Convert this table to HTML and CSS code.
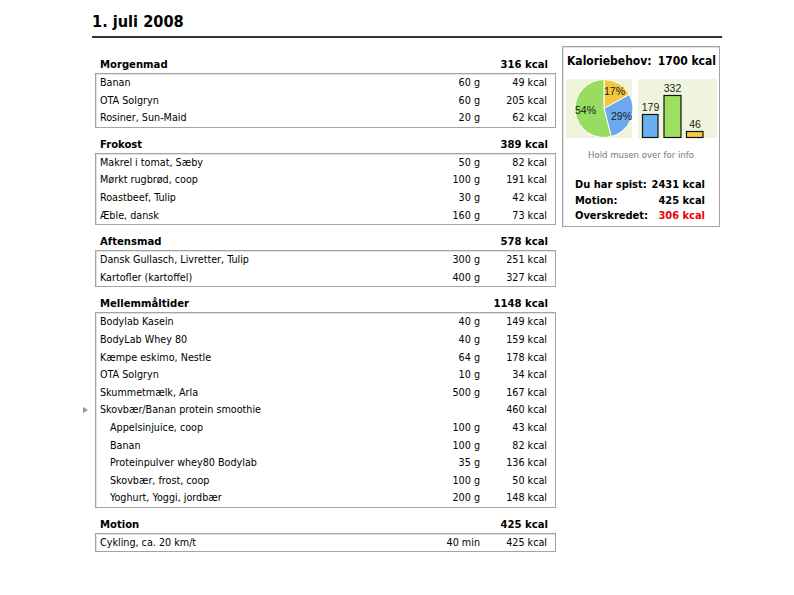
FILE: index.html
```html
<!DOCTYPE html>
<html lang="da">
<head>
<meta charset="utf-8">
<title>1. juli 2008</title>
<link rel="stylesheet" href="styles.css">
</head>
<body>
<div class="page">
  <h1 class="title">1. juli 2008</h1>
  <div class="main">
    <div class="meals">
      <section class="meal">
        <div class="meal-head"><span>Morgenmad</span><span>316 kcal</span></div>
        <div class="box">
          <div class="row"><span>Banan</span><span class="amt">60 g</span><span class="kcal">49 kcal</span></div>
          <div class="row"><span>OTA Solgryn</span><span class="amt">60 g</span><span class="kcal">205 kcal</span></div>
          <div class="row"><span>Rosiner, Sun-Maid</span><span class="amt">20 g</span><span class="kcal">62 kcal</span></div>
        </div>
      </section>
      <section class="meal">
        <div class="meal-head"><span>Frokost</span><span>389 kcal</span></div>
        <div class="box">
          <div class="row"><span>Makrel i tomat, Sæby</span><span class="amt">50 g</span><span class="kcal">82 kcal</span></div>
          <div class="row"><span>Mørkt rugbrød, coop</span><span class="amt">100 g</span><span class="kcal">191 kcal</span></div>
          <div class="row"><span>Roastbeef, Tulip</span><span class="amt">30 g</span><span class="kcal">42 kcal</span></div>
          <div class="row"><span>Æble, dansk</span><span class="amt">160 g</span><span class="kcal">73 kcal</span></div>
        </div>
      </section>
      <section class="meal">
        <div class="meal-head"><span>Aftensmad</span><span>578 kcal</span></div>
        <div class="box">
          <div class="row"><span>Dansk Gullasch, Livretter, Tulip</span><span class="amt">300 g</span><span class="kcal">251 kcal</span></div>
          <div class="row"><span>Kartofler (kartoffel)</span><span class="amt">400 g</span><span class="kcal">327 kcal</span></div>
        </div>
      </section>
      <section class="meal">
        <div class="meal-head"><span>Mellemmåltider</span><span>1148 kcal</span></div>
        <div class="box">
          <div class="row"><span>Bodylab Kasein</span><span class="amt">40 g</span><span class="kcal">149 kcal</span></div>
          <div class="row"><span>BodyLab Whey 80</span><span class="amt">40 g</span><span class="kcal">159 kcal</span></div>
          <div class="row"><span>Kæmpe eskimo, Nestle</span><span class="amt">64 g</span><span class="kcal">178 kcal</span></div>
          <div class="row"><span>OTA Solgryn</span><span class="amt">10 g</span><span class="kcal">34 kcal</span></div>
          <div class="row"><span>Skummetmælk, Arla</span><span class="amt">500 g</span><span class="kcal">167 kcal</span></div>
          <div class="row recipe"><span>Skovbær/Banan protein smoothie</span><span class="amt"></span><span class="kcal">460 kcal</span></div>
          <div class="row sub"><span>Appelsinjuice, coop</span><span class="amt">100 g</span><span class="kcal">43 kcal</span></div>
          <div class="row sub"><span>Banan</span><span class="amt">100 g</span><span class="kcal">82 kcal</span></div>
          <div class="row sub"><span>Proteinpulver whey80 Bodylab</span><span class="amt">35 g</span><span class="kcal">136 kcal</span></div>
          <div class="row sub"><span>Skovbær, frost, coop</span><span class="amt">100 g</span><span class="kcal">50 kcal</span></div>
          <div class="row sub"><span>Yoghurt, Yoggi, jordbær</span><span class="amt">200 g</span><span class="kcal">148 kcal</span></div>
        </div>
      </section>
      <section class="meal">
        <div class="meal-head"><span>Motion</span><span>425 kcal</span></div>
        <div class="box">
          <div class="row"><span>Cykling, ca. 20 km/t</span><span class="amt">40 min</span><span class="kcal">425 kcal</span></div>
        </div>
      </section>
    </div>

    <aside class="panel">
      <div class="panel-head"><span>Kaloriebehov:</span><span>1700 kcal</span></div>
      <div class="charts">
        <div class="chart pie">
          <svg width="66" height="59" viewBox="0 0 66 59">
            <path d="M38,29.5 L38,0.5 A29,29 0 0 1 63.41,15.53 Z" fill="#f3c641" stroke="#fff" stroke-width="1"/>
            <path d="M38,29.5 L63.41,15.53 A29,29 0 0 1 45.21,57.59 Z" fill="#6ba8ee" stroke="#fff" stroke-width="1"/>
            <path d="M38,29.5 L45.21,57.59 A29,29 0 1 1 38,0.5 Z" fill="#98dd5f" stroke="#fff" stroke-width="1"/>
            <text x="38" y="15.5" class="lbl">17%</text>
            <text x="45" y="40.5" class="lbl">29%</text>
            <text x="9" y="35" class="lbl">54%</text>
          </svg>
        </div>
        <div class="chart bars">
          <svg width="79" height="59" viewBox="0 0 79 59">
            <rect x="4.5" y="35.5" width="15.5" height="23" fill="#6baef2" stroke="#111" stroke-width="1.2"/>
            <rect x="26" y="16.5" width="17" height="42" fill="#9de060" stroke="#111" stroke-width="1.2"/>
            <rect x="48.5" y="52.5" width="16.5" height="6" fill="#f6c944" stroke="#111" stroke-width="1.2"/>
            <text x="12.5" y="32" class="blbl">179</text>
            <text x="34.5" y="13" class="blbl">332</text>
            <text x="57" y="49" class="blbl">46</text>
          </svg>
        </div>
      </div>
      <p class="hint">Hold musen over for info</p>
      <div class="summary">
        <div class="sum-row"><span>Du har spist:</span><span>2431 kcal</span></div>
        <div class="sum-row"><span>Motion:</span><span>425 kcal</span></div>
        <div class="sum-row"><span>Overskredet:</span><span class="over">306 kcal</span></div>
      </div>
    </aside>
  </div>
</div>
</body>
</html>
```

FILE: styles.css
```css
* { box-sizing: border-box; }

html, body {
  margin: 0;
  padding: 0;
  background: #fff;
}

body {
  font-family: "DejaVu Sans Condensed", "DejaVu Sans", sans-serif;
  font-size: 10.7px;
  color: #000;
}

.page {
  width: 630px;
  margin-left: 92px;
}

.title {
  margin: 0;
  padding-top: 10px;
  padding-bottom: 2px;
  font-size: 16.2px;
  line-height: 24px;
  font-weight: bold;
  border-bottom: 2px solid #333;
}

.main {
  display: flex;
  align-items: flex-start;
  gap: 6px;
  margin-top: 8px;
  padding-left: 3px;
}

.meals {
  width: 461px;
  padding-top: 2px;
}

.meal {
  margin-top: 8px;
}

.meal-head {
  display: flex;
  justify-content: space-between;
  height: 17px;
  line-height: 17px;
  padding: 0 8px 0 5px;
  font-weight: bold;
  font-size: 11.2px;
}

.box {
  border: 1px solid #a4a4a4;
  box-shadow: inset 1px 1px 0 #e2e2e2;
}

.row {
  position: relative;
  display: grid;
  grid-template-columns: 1fr 80px 67px;
  height: 17.6px;
  line-height: 17.6px;
  padding: 0 8px 0 4px;
  white-space: nowrap;
}

.row .amt,
.row .kcal {
  text-align: right;
}

.row.sub {
  padding-left: 14px;
}

.row.recipe::before {
  content: "";
  position: absolute;
  left: -13px;
  top: 6px;
  border-left: 5px solid #8d9b8d;
  border-top: 3px solid transparent;
  border-bottom: 3px solid transparent;
}

.panel {
  width: 158px;
  height: 181px;
  border: 1px solid #a4a4a4;
  box-shadow: inset 1px 1px 0 #e2e2e2;
  padding: 4px 3px 0 3px;
}

.panel-head {
  display: flex;
  justify-content: space-between;
  font-weight: bold;
  font-size: 12px;
  line-height: 21px;
  padding: 0 0 0 1px;
}

.charts {
  display: flex;
  gap: 6px;
  margin-top: 7px;
}

.chart {
  height: 59px;
  background: #eef5dc;
  overflow: visible;
}

.chart svg {
  display: block;
  overflow: visible;
}

.pie { width: 66px; }
.bars { width: 79px; }

.lbl,
.blbl {
  font-family: "Liberation Sans", Arial, sans-serif;
  font-size: 10.5px;
  fill: #1a1a1a;
}

.blbl {
  text-anchor: middle;
}

.hint {
  margin: 10px 0 0 0;
  text-align: center;
  color: #777;
  font-size: 9.5px;
  line-height: 14px;
}

.summary {
  margin-top: 15px;
  padding: 0 11px 0 9px;
}

.sum-row {
  display: flex;
  justify-content: space-between;
  font-weight: bold;
  font-size: 11px;
  line-height: 15.5px;
}

.over {
  color: #e8000b;
}
```
